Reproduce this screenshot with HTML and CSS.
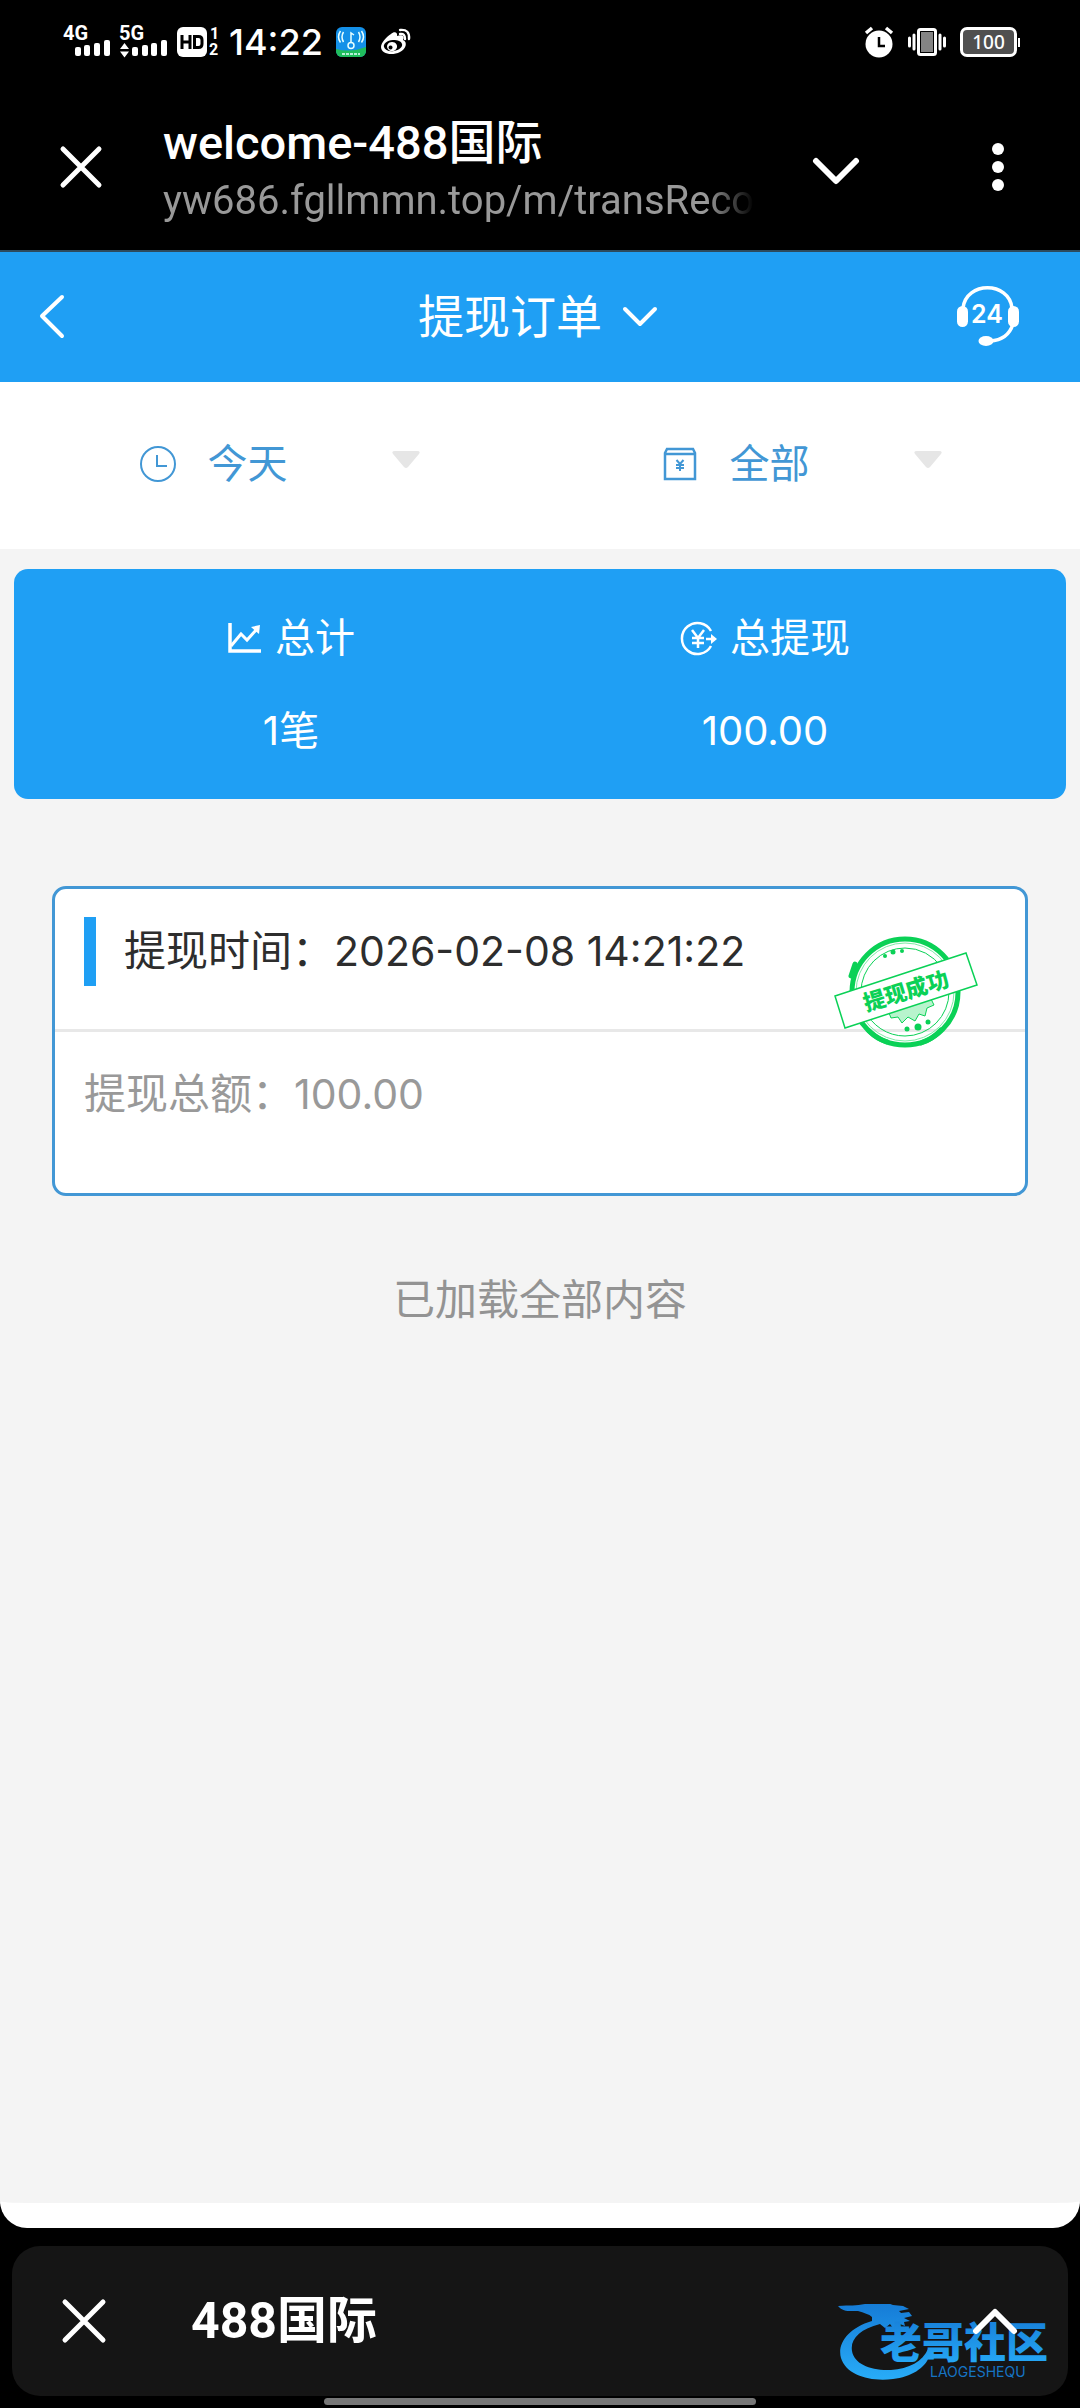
FILE: index.html
```html
<!DOCTYPE html>
<html lang="zh-CN">
<head>
<meta charset="utf-8">
<meta name="viewport" content="width=device-width, initial-scale=1">
<title>welcome-488国际</title>
<link rel="stylesheet" href="styles.css">
</head>
<body>
<div class="status">
  <div class="status-left">
    <svg width="106" height="36" viewBox="0 0 106 36" class="signal" aria-hidden="true">
      <g class="svg-label"><text x="0" y="18">4G</text><text x="56" y="18">5G</text></g>
      <g fill="#fff">
        <rect x="12" y="25" width="6" height="9" rx="2"/><rect x="21" y="23" width="6" height="11" rx="2"/><rect x="31" y="21" width="6" height="13" rx="2"/><rect x="41" y="18" width="6" height="16" rx="2"/>
        <rect x="69" y="25" width="6" height="9" rx="2"/><rect x="79" y="23" width="6" height="11" rx="2"/><rect x="88" y="21" width="6" height="13" rx="2"/><rect x="98" y="18" width="6" height="16" rx="2"/>
        <path d="M57 27l4.500-6 4.500 6zM57 29.500l4.500 6 4.500-6z"/>
      </g>
    </svg>
    <svg width="44" height="36" viewBox="0 0 44 36" class="hd" aria-hidden="true">
      <rect x="0" y="5" width="30" height="30" rx="6" fill="#fff"/>
      <path d="M5 13v14M13 13v14M5 20h8M17.500 14.500h4q3.500 0 3.500 3.500v4q0 3.500-3.500 3.500h-4z" fill="none" stroke="#000" stroke-width="3"/>
      <g class="svg-small"><text x="33" y="17">1</text><text x="32" y="33">2</text></g>
    </svg>
    <span class="clock">14:22</span>
    <svg width="30" height="30" viewBox="0 0 30 30" class="app" aria-hidden="true">
      <defs><clipPath id="app"><rect width="30" height="30" rx="6"/></clipPath></defs>
      <g clip-path="url(#app)"><rect width="30" height="30" fill="#1490e8"/><path d="M0 22q15 4 30-2v10H0z" fill="#20bd5c"/></g>
      <g fill="none" stroke="#e8ffff" stroke-width="1.500"><path d="M15 15V6l3 2M7.500 5q-3 5 0 10M4.500 4q-4 6 0 11.500M22.500 5q3 5 0 10M25.500 4q4 6 0 11.500"/><circle cx="15" cy="18.500" r="3"/><path d="M6 27h18" stroke-dasharray="3 1"/></g>
    </svg>
    <svg width="32" height="30" viewBox="0 0 32 30" aria-hidden="true">
      <path fill="#fff" fill-rule="evenodd" d="M11 7c3-3 7-2 6 2 5-2 8 0 6 4 5 2 3 9-3 12-8 4-19 2-19-5C1 16 6 10 11 7zM13 13c-6 0-10 4-9 7s5 5 10 4 9-4 8-7-4-4-9-4z"/>
      <path fill="#fff" fill-rule="evenodd" d="M12 15a5 4.500 0 1 0 .1 0zM10.500 18.500a2 2 0 1 0 .1 0z"/>
      <path d="M20 7q5-1 5 5M20 3q10-1 9 9" fill="none" stroke="#fff" stroke-width="2.400" stroke-linecap="round"/>
    </svg>
  </div>
  <div class="status-right">
    <svg width="30" height="32" viewBox="0 0 30 32" aria-hidden="true">
      <circle cx="15" cy="18" r="13.500" fill="#fff"/><path d="M2 7l6-5M28 7l-6-5" stroke="#fff" stroke-width="3.500"/><path d="M15 11v9h6" fill="none" stroke="#000" stroke-width="2.500"/>
    </svg>
    <svg width="38" height="30" viewBox="0 0 38 30" aria-hidden="true">
      <rect x="10.500" y="2.500" width="17" height="25" rx="2" fill="#000" stroke="#fff" stroke-width="3"/><rect x="13" y="5" width="12" height="20" fill="#848484"/>
      <path d="M6 8v14M1.500 11v8M32 8v14M36.500 11v8" stroke="#fff" stroke-width="3" stroke-linecap="round"/>
    </svg>
    <div class="battery">100</div>
  </div>
</div>

<header class="browser">
  <button class="icon-btn" aria-label="关闭"><svg width="44" height="44" viewBox="0 0 44 44"><path d="M4 4l36 36M40 4L4 40" class="line-5"/></svg></button>
  <div class="page-info">
    <div class="page-title">welcome-488国际</div>
    <div class="page-url">yw686.fgllmmn.top/m/transRecord</div>
  </div>
  <button class="icon-btn expand" aria-label="展开"><svg width="48" height="30" viewBox="0 0 48 30"><path d="M4 5l20 20L44 5" class="line-6"/></svg></button>
  <button class="icon-btn more" aria-label="更多"><svg width="14" height="50" viewBox="0 0 14 50"><g fill="#fff"><circle cx="7" cy="7" r="6"/><circle cx="7" cy="25" r="6"/><circle cx="7" cy="43" r="6"/></g></svg></button>
</header>

<main class="page">
  <nav class="nav">
    <button class="icon-btn" aria-label="返回"><svg width="28" height="46" viewBox="0 0 28 46"><path d="M24 3L4 22l20 20" class="line-4"/></svg></button>
    <button class="nav-title"><span>提现订单</span><svg width="36" height="24" viewBox="0 0 36 24"><path d="M3 4l15 15L33 4" class="line-4"/></svg></button>
    <button class="icon-btn" aria-label="24小时客服">
      <svg width="64" height="62" viewBox="0 0 64 62"><g fill="none" stroke="#fff" stroke-width="3.500"><path d="M7 22C10-5 53-5 56 22M57 38Q52 54 34 55"/></g><g fill="#fff"><rect x="1" y="20" width="11" height="21" rx="5.500"/><rect x="52" y="20" width="11" height="21" rx="5.500"/><ellipse cx="30" cy="55" rx="7.500" ry="5"/></g><text x="31" y="37" class="svg-24">24</text></svg>
    </button>
  </nav>

  <div class="filters">
    <button class="filter">
      <svg width="38" height="38" viewBox="0 0 38 38"><g fill="none" stroke="#4297d5" stroke-width="2"><circle cx="19" cy="19" r="17"/><path d="M18 10v11h10"/></g></svg>
      <span class="filter-name">今天</span>
      <svg width="28" height="18" viewBox="0 0 28 18" class="caret"><path d="M3 0h22q4 0 2 3L16 16q-2 2-4 0L1 3q-2-3 2-3z" fill="#e6e6e6"/></svg>
    </button>
    <button class="filter">
      <svg width="38" height="38" viewBox="0 0 38 38"><g fill="none" stroke="#4297d5" stroke-width="2.500"><path d="M4 8l2-4h26l2 4v26H4zM4 9h30"/><path d="M15.500 15l3.500 4 3.500-4M19 19v7M15 20h8M15 23h8" stroke-width="2"/></g></svg>
      <span class="filter-name">全部</span>
      <svg width="28" height="18" viewBox="0 0 28 18" class="caret"><path d="M3 0h22q4 0 2 3L16 16q-2 2-4 0L1 3q-2-3 2-3z" fill="#e6e6e6"/></svg>
    </button>
  </div>

  <section class="summary">
    <div class="stat">
      <div class="stat-name"><svg width="36" height="36" viewBox="0 0 36 36"><path d="M3 2v28h31" fill="none" stroke="#fff" stroke-width="3.500"/><path d="M4 25l10-12 6 6L30 8" fill="none" stroke="#fff" stroke-width="3"/><path d="M24 6l9-2-1 9z" fill="#fff"/></svg>总计</div>
      <div class="stat-value">1笔</div>
    </div>
    <div class="stat">
      <div class="stat-name"><svg width="38" height="36" viewBox="0 0 38 36"><g fill="none" stroke="#fff" stroke-width="2.500"><path d="M31 10A15.500 15.500 0 1 0 31 25"/><path d="M12 9l6 8 6-8M18 17v10M12 17h12M12 22h12M26 18h8"/></g><path d="M31 13l6 5-6 5z" fill="#fff"/></svg>总提现</div>
      <div class="stat-value">100.00</div>
    </div>
  </section>

  <article class="record">
    <div class="record-head"><span class="label">提现时间：</span><time class="digits" datetime="2026-02-08T14:21:22">2026-02-08 14:21:22</time></div>
    <div class="record-body"><span class="label">提现总额：</span><span class="digits">100.00</span></div>
    <svg class="stamp" width="146" height="118" viewBox="0 0 146 118" role="img" aria-label="提现成功">
      <g fill="none" stroke="#0ad156">
        <circle cx="72" cy="59" r="53" stroke-width="5"/>
        <circle cx="72" cy="59" r="49" stroke-width="1" stroke="#7deba5"/>
        <circle cx="72" cy="59" r="44" stroke-width="1" stroke-dasharray="120 10"/>
        <path d="M22 31l-4 12M36 98q8 8 18 11M88 110q12-4 20-13" stroke-width="5" stroke-linecap="round"/>
      </g>
      <g fill="#0ad156"><circle cx="52" cy="23" r="2"/><circle cx="60" cy="19" r="2.500"/><circle cx="69" cy="18" r="2"/><circle cx="74" cy="96" r="2.500"/><circle cx="85" cy="94" r="3.500"/><circle cx="95" cy="89" r="2.500"/></g>
      <path d="M56 80l42-14 3 6-7 3-2 8-6-2-4 7-7-4-6 6-4-6-7 1z" fill="#b8f4cd" stroke="#0ad156"/>
      <path d="M2 63L133 20l11 32L12 95z" fill="#fff" stroke="#0ad156" stroke-width="1.500"/>
      <text class="stamp-text" transform="translate(73 58) rotate(-17)" text-anchor="middle" y="8">提现成功</text>
    </svg>
  </article>

  <p class="end">已加载全部内容</p>
</main>

<footer class="dock-area">
  <div class="dock">
    <button class="icon-btn" aria-label="关闭"><svg width="46" height="46" viewBox="0 0 46 46"><path d="M4 4l38 38M42 4L4 42" class="line-5"/></svg></button>
    <span class="dock-title">488国际</span>
    <button class="icon-btn dock-expand" aria-label="展开"><svg width="46" height="30" viewBox="0 0 46 30"><path d="M4 25L23 6l19 19" class="line-6"/></svg></button>
    <svg class="watermark" width="226" height="80" viewBox="0 0 226 80" role="img" aria-label="老哥社区">
      <defs><linearGradient id="wm" x1="0" y1="0" x2="0" y2="1"><stop offset="0" stop-color="#1478d4"/><stop offset="1" stop-color="#28acf8"/></linearGradient></defs>
      <path fill="url(#wm)" d="M34 17C10 24-1 40 3 54c5 17 29 24 52 21 18-2 32-11 36-22l-1-8c-5 12-19 20-37 21-20 1-37-6-39-19-2-12 8-22 28-27l5 4 5-4 3 4 7-4 5 2-1-4 6-1-6-3 8-2-3-4-8 1-2-2 10-2-6-3-10-1q-10-4-22-3l-8-4 2 6c-9 2-15 1-27 2 5 6 11 5 20 5 6 2 11 3 14 6z"/>
      <text class="wm-name" x="42" y="54" fill="url(#wm)">老哥社区</text>
      <text class="wm-sub" x="92" y="73">LAOGESHEQU</text>
    </svg>
  </div>
  <div class="home"></div>
</footer>
</body>
</html>
```
FILE: styles.css
```css
* { box-sizing: border-box; }

body {
  margin: 0;
  min-height: 100vh;
  display: flex;
  flex-direction: column;
  background: #000;
  color: #fff;
  font-family: Roboto, "Noto Sans CJK SC", sans-serif;
}

button {
  padding: 0;
  border: 0;
  background: none;
  color: inherit;
  font: inherit;
}

svg { display: block; flex: none; }

.icon-btn { display: flex; flex: none; }

.line-4, .line-5, .line-6 {
  fill: none;
  stroke: #fff;
  stroke-linecap: round;
  stroke-linejoin: round;
}
.line-4 { stroke-width: 4; }
.line-5 { stroke-width: 5; }
.line-6 { stroke-width: 6; }

/* status bar */
.status {
  height: 84px;
  padding: 0 63px 0 63px;
  display: flex;
  align-items: center;
  justify-content: space-between;
}
.status-left, .status-right { display: flex; align-items: center; }
.status-left { gap: 8px; }
.status-right { gap: 14px; }
.svg-label { fill: #fff; font: 700 20px Roboto, sans-serif; }
.svg-small { fill: #fff; font: 700 16px Roboto, sans-serif; }
.signal, .hd { margin-bottom: 5px; }
.signal, .hd { overflow: visible; }
.clock {
  font-family: Inter, sans-serif;
  font-size: 36px;
  line-height: 40px;
  font-weight: 500;
}
.app { margin: 0 6px 0 5px; }
.battery {
  position: relative;
  width: 57px;
  height: 30px;
  border: 3px solid #fff;
  border-radius: 7px;
  background: #505050;
  font: 500 19px/24px "Noto Sans", sans-serif;
  text-align: center;
}
.battery::after {
  content: "";
  position: absolute;
  right: -6px;
  top: 8px;
  width: 2px;
  height: 9px;
  background: #fff;
}

/* browser bar */
.browser {
  height: 168px;
  padding: 0 75px 0 59px;
  display: flex;
  align-items: center;
  border-bottom: 2px solid #2c4a5e;
}
.page-info {
  flex: 1;
  min-width: 0;
  margin: 8px 58px 0 60px;
}
.page-title { font-size: 47px; line-height: 60px; font-weight: 500; }
.page-url {
  overflow: hidden;
  white-space: nowrap;
  color: #999;
  font-size: 40px;
  line-height: 56px;
  -webkit-mask-image: linear-gradient(to right, #000 92%, transparent);
  mask-image: linear-gradient(to right, #000 92%, transparent);
}
.expand { margin-top: 8px; }
.more { margin-left: 131px; }

/* page */
.page {
  flex: 1;
  background: #f4f4f4;
  border-bottom: 25px solid #fff;
  border-radius: 0 0 27px 27px;
}
.nav {
  height: 130px;
  padding: 0 60px 0 38px;
  display: grid;
  grid-template-columns: 1fr auto 1fr;
  align-items: center;
  background: #1f9ff4;
}
.nav > :last-child { justify-self: end; }
.nav-title {
  display: flex;
  align-items: center;
  gap: 20px;
  margin-left: 18px;
  font-size: 46px;
  line-height: 60px;
}
.svg-24 { fill: #fff; font: 600 25px Inter, sans-serif; text-anchor: middle; }

.filters {
  height: 167px;
  padding: 0 18px;
  display: grid;
  grid-template-columns: 1fr 1fr;
  background: #fff;
}
.filter {
  display: flex;
  align-items: center;
  justify-content: center;
  padding-bottom: 4px;
}
.filter-name {
  margin: 2px 104px 0 31px;
  color: #4297d5;
  font-size: 40px;
  line-height: 56px;
}
.caret { margin-bottom: 8px; }

.summary {
  margin: 20px 14px 0;
  padding: 40px 64px 38px 40px;
  display: grid;
  grid-template-columns: 1fr 1fr;
  border-radius: 14px;
  background: #1f9ff4;
  font-size: 40px;
  line-height: 60px;
  text-align: center;
}
.stat { display: grid; gap: 32px; }
.stat-name {
  display: flex;
  align-items: center;
  justify-content: center;
  gap: 12px;
}
.stat-value, .digits { font-family: Inter, "Noto Sans CJK SC", sans-serif; }

.record {
  position: relative;
  margin: 87px 52px 0;
  border: 3px solid #4297d5;
  border-radius: 14px;
  background: #fff;
  font-size: 42px;
  line-height: 69px;
}
.record-head {
  display: flex;
  padding: 28px 29px 43px;
  border-bottom: 3px solid #e8e8e8;
  color: #2d2d2d;
}
.record-head::before {
  content: "";
  width: 12px;
  margin-right: 28px;
  background: #1f9ff4;
}
.record-body {
  display: flex;
  padding: 28px 29px 64px;
  color: #999;
}
.record .digits { font-size: 41px; }
.stamp { position: absolute; right: 46px; top: 44px; }
.stamp-text { fill: #0ad156; font: 900 22px "Noto Sans CJK SC", sans-serif; }

.end {
  margin: 75px 0 0;
  color: #939393;
  font-size: 42px;
  line-height: 60px;
  text-align: center;
}

/* bottom dock */
.dock-area { padding: 18px 12px 3px; }
.dock {
  position: relative;
  height: 150px;
  padding: 0 50px 0 49px;
  display: flex;
  align-items: center;
  border-radius: 28px;
  background: #151515;
}
.dock-title {
  flex: 1;
  margin-left: 84px;
  font-size: 50px;
  line-height: 60px;
  font-weight: 700;
}
.dock-expand { position: relative; z-index: 1; }
.watermark { position: absolute; right: 4px; top: 58px; }
.wm-name { font: 900 42px "Noto Sans CJK SC", sans-serif; }
.wm-sub { fill: #1674c4; font: 14px Inter, sans-serif; }
.home {
  width: 432px;
  max-width: 60%;
  height: 7px;
  margin: 2px auto 0;
  border-radius: 4px;
  background: #777;
}
```
